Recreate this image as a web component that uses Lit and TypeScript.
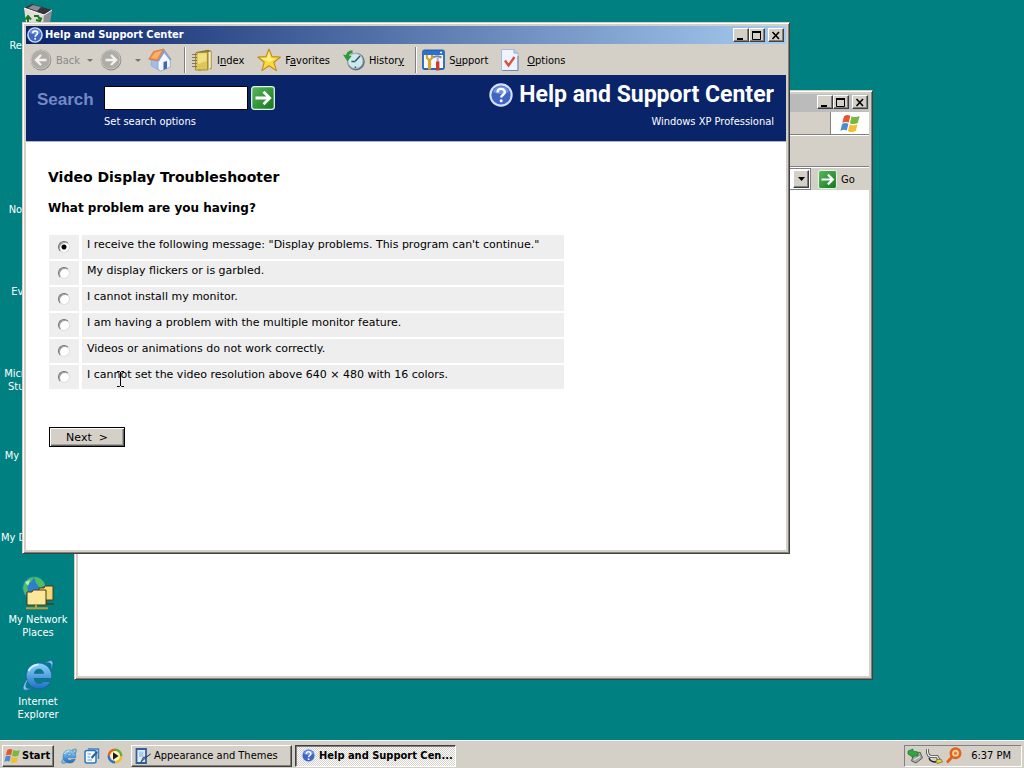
import { LitElement, html, css } from "lit";
import { customElement } from "lit/decorators.js";

const helpIcon = (size: number) => html`<svg width=${size} height=${size} viewBox="0 0 24 24" aria-hidden="true">
  <circle cx="12" cy="12" r="11.7" fill="#d5e0f6"/><circle cx="12" cy="12" r="9.6" fill="#3f66c4"/>
  <path d="M4 9a8.5 8.5 0 0 1 16 0Q12 13 4 9Z" fill="#6f93e0"/>
  <path d="M8.5 9.4C8.5 4.8 15.8 4.8 15.8 9.2C15.8 11.8 12.2 11.6 12.2 14.6" fill="none" stroke="#fff" stroke-width="2.4"/>
  <circle cx="12.2" cy="17.8" r="1.5" fill="#fff"/></svg>`;

const roundArrow = (left: boolean) => html`<svg width="22" height="22" viewBox="0 0 22 22" aria-hidden="true">
  <circle cx="11" cy="11" r="10.4" fill="#8f8d89"/><circle cx="10.6" cy="10.5" r="9.5" fill="#aeaca7" stroke="#c9c7c2"/>
  <path d=${left ? "M16.5 11H6.5M11 6L6 11L11 16" : "M5.5 11H15.5M11 6L16 11L11 16"} fill="none" stroke="#f4f2ee" stroke-width="2.4"/></svg>`;

const goIcon = (size: number) => html`<svg width=${size} height=${size} viewBox="0 0 24 24" aria-hidden="true">
  <defs><linearGradient id="go" x1="0" y1="0" x2="1" y2="1"><stop offset="0" stop-color="#5bb95e"/><stop offset="1" stop-color="#12761a"/></linearGradient></defs>
  <rect x=".7" y=".7" width="22.6" height="22.6" rx="2.5" fill="url(#go)" stroke="#e4f3e2" stroke-width="1.3"/>
  <path d="M4.5 12H18M12.5 5.8L18.7 12L12.5 18.2" fill="none" stroke="#fff" stroke-width="2.8"/></svg>`;

const caret = html`<svg width="7" height="4" viewBox="0 0 7 4" aria-hidden="true"><path d="M0 0H7L3.5 4Z" fill="currentColor"/></svg>`;
const smallCaret = html`<svg width="6" height="3" viewBox="0 0 6 3" aria-hidden="true"><path d="M0 0H6L3 3Z" fill="currentColor"/></svg>`;

const flag = (w: number, h: number) => html`<svg width=${w} height=${h} viewBox="0 0 21 19" aria-hidden="true">
  <path d="M4 2.2Q7 0 10.4 1.8L8.7 8.6Q5.4 7 2.3 9Z" fill="#e2592b"/>
  <path d="M11.6 2.2Q15 4 19.6 2L17.8 9Q14 11 9.9 9.2Z" fill="#78b83c"/>
  <path d="M2 10.2Q5.2 8.2 8.4 9.9L6.8 16.4Q3.6 14.8.4 16.9Z" fill="#4a8ad8"/>
  <path d="M9.6 10.5Q13.6 12.3 17.4 10.3L15.8 17Q11.8 19 8 17.2Z" fill="#f2c02f"/></svg>`;

const ieIcon = (size: number) => html`<svg width=${size} height=${size} viewBox="0 0 32 32" aria-hidden="true">
  <defs><linearGradient id="ie" x1="0" y1="0" x2="0" y2="1"><stop offset="0" stop-color="#8fd4fb"/><stop offset="1" stop-color="#1b6fc4"/></linearGradient></defs>
  <path fill-rule="evenodd" d="M16.5 4A13 13 0 0 1 29.5 19.5H12.2Q13 24.4 17.2 24.4Q20 24.4 21.3 22.5H28.8A13 13 0 1 1 16.5 4ZM12.4 14.3H21.5Q20.8 10.2 17 10.2Q13.2 10.2 12.4 14.3Z" fill="url(#ie)" stroke="#1a5f9e" stroke-width=".8"/>
  <path d="M22 4.5Q31-1.5 31 4.5Q31 8 28.5 12Q30 6 28.5 4.6Q27 3.2 22 4.5ZM5 20Q-1.5 30 2.5 31Q6 32 11 28.8Q5.5 30.3 4.3 28.6Q3 26.5 6 21Z" fill="#7cc6f5" stroke="#1a5f9e" stroke-width=".7"/>
  <path d="M6.5 12Q9.5 6 16.5 5.5" fill="none" stroke="#d8f1ff" stroke-width="1.8"/></svg>`;

const homeIcon = html`<svg width="24" height="24" viewBox="0 0 24 24" aria-hidden="true">
  <path d="M3 11L10 13L12.5 23L3.5 18Z" fill="#9dbdec" stroke="#7f9fd6" stroke-width=".6"/>
  <path d="M10 12L16.5 3.5L22.3 11.5V19L12.5 23L10 21Z" fill="#f2f6fe" stroke="#8ca4cf" stroke-width=".8"/>
  <path d="M.8 11.2L5.5 3.5L16 1L9.8 12.8Z" fill="#f38a3d" stroke="#d06b24" stroke-width=".6"/><path d="M3 10L7 4.5L14 2.5L8.8 11Z" fill="#fbb06a"/>
  <path d="M16 1L23.6 11.4L22 12.6L16.2 5L11 13.4L9.6 12.8Z" fill="#8b9dcb"/>
  <path d="M15.5 14L19 13V20.4L15.5 21.7Z" fill="#3f68b4"/></svg>`;

const indexIcon = html`<svg width="22" height="22" viewBox="0 0 22 22" aria-hidden="true">
  <path d="M5 3L17 .8L20.5 2V20L8 21.6L5 20Z" fill="#8f7a24"/><path d="M4.5 4L16.5 3V21H4.5Z" fill="#dcc657" stroke="#a58c2c"/>
  <path d="M7 4.5L15.5 4V12L7 15Z" fill="#efe086"/><path d="M17.5 3L19.8 2.5V19L17.5 20.5Z" fill="#f5efc9"/>
  <path d="M1 5.5H6M1 8.5H6M1 11.5H6M1 14.5H6M1 17.5H6" stroke="#7d7860" stroke-width="1.2"/></svg>`;

const starIcon = html`<svg width="24" height="24" viewBox="0 0 24 24" aria-hidden="true">
  <path d="M12 1L15 8.6L23.4 9L16.8 14.2L19.4 22.6L12 17.8L5 22.6L7.2 14.2L.8 9L9 8.6Z" fill="#fbd83c" stroke="#c08a1c" stroke-width="1.1" stroke-linejoin="round"/>
  <path d="M12 4L13.8 10L19 11L12 14L4 10.2L10 10Z" fill="#fff08a"/></svg>`;

const historyIcon = html`<svg width="22" height="22" viewBox="0 0 22 22" aria-hidden="true">
  <circle cx="13" cy="12.6" r="8.8" fill="#5f7380"/><circle cx="12.4" cy="12" r="7.6" fill="#cfe8ef" stroke="#9db2bc"/>
  <path d="M12.4 12L17 7M12.4 12.5H8.4M12.4 17.6V19" stroke="#33566a" stroke-width="1.5"/>
  <path d="M9.5 2.8Q4.6 3 4.3 7.4" fill="none" stroke="#2c9a38" stroke-width="3"/><path d="M0 5.6L8.6 7.2L4.4 12.6Z" fill="#2c9a38"/></svg>`;

const supportIcon = html`<svg width="23" height="22" viewBox="0 0 23 22" aria-hidden="true">
  <rect x="1" y="1.5" width="21" height="18.5" rx="1.5" fill="#f4f8ff" stroke="#2a62b4" stroke-width="1.8"/><path d="M1 2H22V6H1Z" fill="#2f70cc"/>
  <path d="M18 3.5H20" stroke="#fff" stroke-width="1.3"/>
  <path d="M5 6V9L7 11V20.5M10 6V9L8 11V20.5" fill="none" stroke="#d9a528" stroke-width="2.2"/>
  <path d="M11 8.5Q14 6 19.5 8.5" fill="none" stroke="#7b8794" stroke-width="2.2"/><path d="M15.7 9V14" stroke="#aab" stroke-width="2"/><path d="M15.7 12.5V21.5" stroke="#d23c2c" stroke-width="3.4"/></svg>`;

const optionsIcon = html`<svg width="22" height="24" viewBox="2 0 22 24" aria-hidden="true">
  <path d="M2.5 1.5H15L19 5V22.5H2.5Z" fill="#eef3fd" stroke="#a9b9da"/><path d="M15 1.5V5H19" fill="#c4d2ec" stroke="#8fa4cc"/>
  <path d="M3.5 22.5H19V8" fill="none" stroke="#6f86b4"/><path d="M6 12.5L9.5 17.5L15.5 9" fill="none" stroke="#d8503e" stroke-width="2.4"/></svg>`;

const recycleIcon = html`<svg width="32" height="32" viewBox="0 0 32 32" aria-hidden="true">
  <path d="M2 5L10 1L30 7L25 14Z" fill="#34343a"/><path d="M6 5L11 2L19 4L15 8Z" fill="#8b8b93"/>
  <path d="M2 5L22 12L21 31L5 27Z" fill="#e0dfd6"/><path d="M22 12L30 7L27 27L21 31Z" fill="#8f8f95"/><path d="M2 5L22 12L30 7" fill="none" stroke="#fff"/>
  <path d="M6 19V14.5M3.5 16.5L6 13L9 16.5M12 13H16L17.5 16M19.5 14.5L18 18L14 17" fill="none" stroke="#167a1e" stroke-width="2"/></svg>`;

const networkIcon = html`<svg width="32" height="34" viewBox="0 0 32 34" aria-hidden="true">
  <circle cx="12" cy="12" r="11.5" fill="#2d7fcd"/><path d="M1 12Q3 2 12 1Q10 6 5 9L6 15L3 19ZM12 1Q20 1 23 9L18 12L14 7Z" fill="#4cc05a"/><path d="M3 6L8 4L6 10Z" fill="#b6f2b0"/>
  <path d="M17 12H22L23 10H31V24H17Z" fill="#f3d877" stroke="#4b3c10"/><path d="M24 24V28M17 28H32" stroke="#4b3c10" stroke-width="1.4"/>
  <path d="M5 16H10L11 14H24V29H5Z" fill="#fbe79a" stroke="#4b3c10"/><path d="M14 29V32M4 32.3H26" stroke="#c49a35" stroke-width="2"/></svg>`;

const outlookIcon = html`<svg width="16" height="16" viewBox="0 0 16 16" aria-hidden="true">
  <rect x="1" y="2.5" width="11" height="12.5" rx="2" fill="#f4f9ff" stroke="#2d78bd" stroke-width="1.5"/><path d="M4 1H14.5V11" fill="none" stroke="#3c85c8" stroke-width="1.5"/>
  <path d="M3.5 6H7M3.5 9H6M3.5 12H8" stroke="#6aa2d4"/><path d="M13 4L7.5 10" stroke="#27608f" stroke-width="2"/></svg>`;

const mediaIcon = html`<svg width="16" height="16" viewBox="0 0 16 16" aria-hidden="true">
  <path d="M8 8V.5A7.5 7.5 0 0 1 15.5 8Z" fill="#61ad39"/><path d="M8 8H15.5A7.5 7.5 0 0 1 8 15.5Z" fill="#f1bd20"/><path d="M8 8V15.5A7.5 7.5 0 0 1 .5 8Z" fill="#3673c8"/><path d="M8 8H.5A7.5 7.5 0 0 1 8 .5Z" fill="#e36328"/>
  <circle cx="8" cy="8" r="5" fill="#fff3c4"/><path d="M6 4.2L11.6 8L6 11.8Z" fill="#1b1b1b"/></svg>`;

const themeIcon = html`<svg width="16" height="16" viewBox="0 0 16 16" aria-hidden="true">
  <path d="M1.5 1H11V15H1.5Z" fill="#e2eefb" stroke="#305f9c" stroke-width="1.8"/><path d="M4 3.5H8.5V9H4Z" fill="#a9cdf3"/>
  <path d="M15.5 6L10 10.5L6 14L8 9.5L12 8.5Z" fill="#6e8db0" stroke="#24405f" stroke-width=".8"/></svg>`;

const trayIcons = html`
  <svg width="17" height="16" viewBox="0 0 17 16" aria-hidden="true"><path d="M6 8L13 4L15.5 10L9 15L4.5 13Z" fill="#a5a8a4" stroke="#5c5f5b"/><path d="M7 12L13 8.5" stroke="#eee"/><path d="M1 3L6 1V3L11 4V8H6V9.5L1 6Z" fill="#31a63b" stroke="#146b1e" stroke-width=".6"/></svg>
  <svg width="17" height="16" viewBox="0 0 17 16" aria-hidden="true"><path d="M1.5 1Q1 8 5 8.5H11L13 12" fill="none" stroke="#444" stroke-width="3"/><path d="M1.5 1Q1 8 5 8.5H11L13 12" fill="none" stroke="#eee" stroke-width="1.4"/><path d="M3 10Q4 14 10 14" fill="none" stroke="#222" stroke-width="1.3"/><path d="M10 12L15 11L16.5 14L11 15.5Z" fill="#e6d235" stroke="#6b6218" stroke-width=".7"/></svg>
  <svg width="17" height="17" viewBox="0 0 17 17" aria-hidden="true"><circle cx="10.5" cy="6.2" r="4.7" fill="#f6cfa6" stroke="#dd6418" stroke-width="2.6"/><circle cx="10.5" cy="6.2" r="1.6" fill="#e37a30"/><path d="M7 10L2 15.5" stroke="#dd6418" stroke-width="2.8"/></svg>`;

const shared = css`
  * { box-sizing: border-box; }
  svg { display: block; flex: none; }
  button, input { font: inherit; color: inherit; }
  button { cursor: default; }
  .raised {
    background: #d4d0c8;
    border: 1px solid;
    border-color: #fff #404040 #404040 #fff;
    box-shadow: inset -1px -1px #808080;
  }
`;

@customElement("caption-buttons")
class CaptionButtons extends LitElement {
  static styles = [shared, css`
    :host { display: flex; }
    button { width: 16px; height: 14px; padding: 0; display: grid; place-items: center; color: #000; }
    .close { margin-left: 3px; }
  `];
  render() {
    return html`
      <button class="raised" aria-label="Minimize"><svg width="10" height="9"><path d="M1 7H7V9H1Z"/></svg></button>
      <button class="raised" aria-label="Maximize"><svg width="10" height="9"><path d="M.5 1H8.5V8.5H.5Z" fill="none" stroke="#000"/><path d="M0 0H9V2H0Z"/></svg></button>
      <button class="raised close" aria-label="Close"><svg width="10" height="9"><path d="M1.5 1L8 8M8 1L1.5 8" stroke="#000" stroke-width="1.6"/></svg></button>`;
  }
}

@customElement("explorer-window")
class ExplorerWindow extends LitElement {
  static styles = [shared, css`
    :host {
      display: flex; flex-direction: column; padding: 3px; background: #fff;
      border: 1px solid; border-color: #d4d0c8 #404040 #404040 #d4d0c8;
      box-shadow: inset 1px 1px #fff, inset -1px -1px #808080, inset 3px 3px #d4d0c8, inset -3px -3px #d4d0c8;
    }
    .title { height: 18px; display: flex; justify-content: flex-end; align-items: flex-start; padding: 1px 1px 0 0; background: linear-gradient(90deg, #808080, #c0c0c0); }
    .menu { height: 23px; display: flex; justify-content: flex-end; background: #d4d0c8; border-bottom: 1px solid #808080; }
    .brand { width: 39px; display: grid; place-items: center; background: #fff; border-left: 1px solid #808080; }
    .tools { height: 32px; background: #d4d0c8; border-top: 1px solid #fff; border-bottom: 1px solid #808080; }
    .address { height: 23px; display: flex; align-items: center; justify-content: flex-end; gap: 7px; background: #d4d0c8; border-top: 1px solid #fff; }
    .field { flex: 1; height: 22px; display: flex; justify-content: flex-end; padding: 1px; background: #fff; border: 1px solid #808080; }
    .field input { flex: 1; min-width: 0; border: 0; padding: 0; outline: 0; }
    .drop { width: 16px; padding: 0; display: grid; place-items: center; }
    .go { display: flex; align-items: center; gap: 4px; width: 51px; border: 0; padding: 0; background: none; }
  `];
  render() {
    return html`
      <div class="title"><caption-buttons></caption-buttons></div>
      <div class="menu"><span class="brand">${flag(21, 19)}</span></div>
      <div class="tools"></div>
      <div class="address">
        <div class="field"><input aria-label="Address"><button class="raised drop" aria-label="Show addresses">${caret}</button></div>
        <button class="go">${goIcon(19)} Go</button>
      </div>`;
  }
}

@customElement("help-window")
class HelpWindow extends LitElement {
  private problems = [
    `I receive the following message: "Display problems. This program can't continue."`,
    "My display flickers or is garbled.",
    "I cannot install my monitor.",
    "I am having a problem with the multiple monitor feature.",
    "Videos or animations do not work correctly.",
    "I cannot set the video resolution above 640 × 480 with 16 colors.",
  ];
  static styles = [shared, css`
    :host {
      display: flex; flex-direction: column; padding: 3px; background: #d4d0c8;
      border: 1px solid; border-color: #d4d0c8 #404040 #404040 #d4d0c8;
      box-shadow: inset 1px 1px #fff, inset -1px -1px #808080;
    }
    .title { height: 18px; display: flex; align-items: center; gap: 2px; padding: 0 2px 0 1px; background: linear-gradient(90deg, #0a246a, #a6caf0); color: #fff; }
    .title h1 { flex: 1; margin: 0; font-size: 11px; line-height: 18px; }
    .tools { height: 31px; display: flex; align-items: center; padding: 1px 0 0 4px; }
    .tools button { display: flex; align-items: center; gap: 4px; padding: 0; border: 0; background: none; white-space: nowrap; }
    .tools button:disabled { color: #8b8984; }
    .tools .more { margin: 0 7px; color: #77756f; }
    .tools .more + .home { margin: 0 12px 0 0; }
    .ahead { margin-right: 6px; }
    .sep { width: 2px; height: 26px; border-left: 1px solid #808080; border-right: 1px solid #fff; }
    .group { display: flex; align-items: center; gap: 13px; padding: 0 11px 0 5px; }
    .banner { display: flex; justify-content: space-between; height: 67px; padding: 7px 12px 0 11px; background: #0a246a; border-bottom: 1px solid #a9b4d6; color: #fff; }
    .search { display: grid; grid-template-columns: 56px 144px 24px; column-gap: 11px; align-content: start; }
    .search label { font: bold 17px/32px "Liberation Sans", Arial, sans-serif; color: #7489c3; padding-top: 2px; height: 32px; }
    .search input { width: 144px; height: 24px; margin-top: 4px; border: 1px solid #000; background: #fff; color: #000; padding: 2px; border-radius: 0; }
    .search button { width: 24px; height: 24px; margin: 4px 0 0 -8px; border: 0; padding: 0; background: none; }
    .search a { grid-column: 2; line-height: 16px; color: #fff; text-decoration: none; }
    .brand { text-align: right; }
    .brand h2 { display: flex; align-items: center; gap: 6px; margin: 0; font: bold 23px/26px Roboto, "Liberation Sans", Arial, sans-serif; white-space: nowrap; }
    .brand p { margin: 6px 0 0; line-height: 16px; }
    .page { flex: 1; min-height: 0; overflow: hidden; padding: 26px 22px; background: #fff; font-family: "DejaVu Sans", Verdana, sans-serif; font-size: 11px; }
    .page h3 { margin: 0; font-size: 14px; line-height: 18px; }
    .page h4 { margin: 14px 0 0; font-size: 12px; line-height: 16px; }
    fieldset { display: grid; gap: 2px; max-width: 516px; margin: 19px 0 0; padding: 0 0 0 1px; border: 0; }
    .row { display: grid; grid-template-columns: 30px 1fr; column-gap: 3px; min-height: 24px; }
    .pick { display: grid; justify-content: center; align-items: center; background: #eee; }
    .row label { padding: 2px 5px 6px; line-height: 16px; background: #eee; }
    .row input { appearance: none; width: 12px; height: 12px; margin: 0; border-radius: 50%; border: 1px solid; border-color: #707070 #ddd #ddd #707070; background: #fff; box-shadow: inset 1px 1px #a0a0a0; }
    .row input:checked { background: radial-gradient(circle at 5px 5px, #000 2px, #fff 3px); }
    .next { display: block; width: 76px; height: 20px; margin: 38px 0 0 1px; padding: 0; background: #d4d0c8; border: 1px solid #000; box-shadow: inset 1px 1px #fff, inset -1px -1px #606060, inset -2px -2px #a0a0a0; white-space: pre; }
  `];
  render() {
    return html`
      <div class="title">${helpIcon(16)}<h1>Help and Support Center</h1><caption-buttons></caption-buttons></div>
      <nav class="tools" aria-label="Toolbar">
        <button disabled>${roundArrow(true)}Back</button>
        <button class="more" aria-label="Back history">${smallCaret}</button>
        <button class="ahead" disabled aria-label="Forward">${roundArrow(false)}</button>
        <button class="more" aria-label="Forward history">${smallCaret}</button>
        <button class="home" aria-label="Home">${homeIcon}</button>
        <span class="sep"></span>
        <div class="group">
          <button>${indexIcon}<span>I<u>n</u>dex</span></button>
          <button>${starIcon}<span>F<u>a</u>vorites</span></button>
          <button>${historyIcon}<span>Histor<u>y</u></span></button>
        </div>
        <span class="sep"></span>
        <div class="group">
          <button>${supportIcon}<span>S<u>u</u>pport</span></button>
          <button>${optionsIcon}<span><u>O</u>ptions</span></button>
        </div>
      </nav>
      <header class="banner">
        <form class="search" @submit=${(e: Event) => e.preventDefault()}>
          <label for="query">Search</label><input id="query" type="text"><button aria-label="Start search">${goIcon(24)}</button>
          <a href="#options">Set search options</a>
        </form>
        <div class="brand"><h2>${helpIcon(24)}Help and Support Center</h2><p>Windows XP Professional</p></div>
      </header>
      <main class="page">
        <h3>Video Display Troubleshooter</h3>
        <h4 id="question">What problem are you having?</h4>
        <fieldset aria-labelledby="question">
          ${this.problems.map((text, i) => html`<div class="row">
            <span class="pick"><input type="radio" name="problem" id="p${i}" ?checked=${i === 0}></span>
            <label for="p${i}">${text}</label>
          </div>`)}
        </fieldset>
        <button class="next">Next  &gt;</button>
      </main>`;
  }
}

@customElement("task-bar")
class TaskBar extends LitElement {
  static styles = [shared, css`
    :host { display: flex; align-items: center; height: 28px; padding: 2px 2px 0; gap: 3px; background: #d4d0c8; border-top: 1px solid #fff; }
    button { display: flex; align-items: center; height: 22px; padding: 0 3px; gap: 3px; white-space: nowrap; }
    .start { width: 52px; padding: 0 1px; gap: 1px; font-weight: bold; }
    .quick { display: flex; gap: 7px; padding: 0 5px 0 4px; }
    .quick button { border: 0; padding: 0; background: none; }
    .task { width: 161px; }
    .active { font-weight: bold; border: 1px solid; border-color: #404040 #fff #fff #404040; box-shadow: inset 1px 1px #808080; background: repeating-conic-gradient(#fff 0 25%, #d4d0c8 0 50%) 0 0 / 2px 2px; padding: 0 0 0 5px; }
    .tray { display: flex; align-items: center; gap: 2px; height: 22px; margin-left: auto; padding: 0 10px 0 2px; border: 1px solid; border-color: #808080 #fff #fff #808080; }
    time { margin-left: 7px; }
  `];
  render() {
    return html`
      <button class="start raised">${flag(17, 16)}Start</button>
      <div class="quick">
        <button aria-label="Internet Explorer">${ieIcon(16)}</button>
        <button aria-label="Outlook Express">${outlookIcon}</button>
        <button aria-label="Media Player">${mediaIcon}</button>
      </div>
      <button class="task raised">${themeIcon}<span>Appearance and Themes</span></button>
      <button class="task active">${helpIcon(15)}<span>Help and Support Cen...</span></button>
      <div class="tray">${trayIcons}<time>6:37 PM</time></div>`;
  }
}

@customElement("app-root")
class AppRoot extends LitElement {
  private shortcuts = [
    { name: "Recycle Bin", icon: recycleIcon },
    { name: "" }, { name: "Notepad++" }, { name: "Everything" },
    { name: "Microsoft Dev Studio 2008" }, { name: "My Computer" }, { name: "My Documents" },
    { name: "My Network Places", icon: networkIcon },
    { name: "Internet Explorer", icon: ieIcon(32) },
  ];
  static styles = [shared, css`
    :host { display: flex; flex-direction: column; height: 100vh; overflow: hidden; background: #008080; color: #000; font: 11px/13px "DejaVu Sans Condensed", "DejaVu Sans", Tahoma, sans-serif; }
    .desktop { position: relative; flex: 1; min-height: 0; overflow: hidden; }
    .icons { display: grid; grid-auto-rows: 82px; width: 76px; margin: 0; padding: 2px 0 0; list-style: none; }
    .icons a { display: flex; flex-direction: column; align-items: center; gap: 3px; color: #fff; text-align: center; text-decoration: none; }
    .glyph { height: 34px; display: grid; place-items: center; }
    .behind { position: absolute; left: 74px; top: 90px; right: 151px; bottom: 60px; min-width: 300px; }
    .front { position: absolute; left: 22px; top: 22px; right: 234px; bottom: 186px; min-width: 640px; }
    .cursor { position: absolute; left: 116px; top: 371px; pointer-events: none; }
  `];
  render() {
    return html`
      <div class="desktop">
        <ul class="icons">${this.shortcuts.map(s => html`<li><a href="#"><span class="glyph">${s.icon ?? ""}</span>${s.name}</a></li>`)}</ul>
        <explorer-window class="behind"></explorer-window>
        <help-window class="front"></help-window>
        <svg class="cursor" width="9" height="16" viewBox="0 0 9 16" aria-hidden="true"><path d="M1 .5H3.5L4.5 1.5L5.5 .5H8M4.5 1V15M1 15.5H3.5L4.5 14.5L5.5 15.5H8" fill="none" stroke="#000"/></svg>
      </div>
      <task-bar></task-bar>`;
  }
}
